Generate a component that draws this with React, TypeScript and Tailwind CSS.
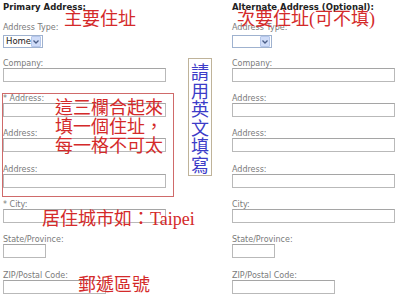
import type { ReactNode } from 'react';

const note = "font-['Liberation_Serif','Noto_Sans_CJK_TC',serif] text-[#d42a2a]";

function Label({ children, mt }: { children: ReactNode; mt: string }) {
  return <div className={`${mt} text-[8px] leading-[8px] text-[#7a7a7a] whitespace-nowrap`}>{children}</div>;
}

function Input({ w }: { w: string }) {
  return <div className={`${w} h-[14px] border border-[#b9b9b9] border-t-[#a5a5a5] bg-white`} />;
}

function Select({ value }: { value?: string }) {
  return (
    <div className="mt-[3px] flex h-[13px] w-[40px] items-center border border-[#9fb2cf] bg-white pl-[2px] pr-px">
      <span className="flex-1 text-[8.5px] leading-[11px] text-[#222]">{value}</span>
      <span className="flex h-[11px] w-[10px] items-center justify-center rounded-[1px] border border-[#b4c6ea] bg-[#cfdcf8]">
        <svg width="6" height="4" viewBox="0 0 6 4">
          <path d="M0.5 0.5 L3 3 L5.5 0.5" fill="none" stroke="#4a5d86" strokeWidth="1.3" />
        </svg>
      </span>
    </div>
  );
}

function Column({ title, type, boxed }: { title: string; type?: string; boxed?: boolean }) {
  return (
    <div className="flex flex-col">
      <div className="pt-[2px] text-[8.5px] font-bold leading-[10px] text-[#222] whitespace-nowrap">{title}</div>
      <Label mt="mt-[12px]">Address Type:</Label>
      <Select value={type} />
      <Label mt="mt-[12px]">Company:</Label>
      <Input w="w-[163px]" />
      <div
        className={`mt-[11px] -ml-px w-[172px] border pt-px pb-[8px] ${
          boxed ? 'border-[#cf6a6a]' : 'border-transparent'
        }`}
      >
        <Label mt="mt-0">{boxed ? '* Address:' : 'Address:'}</Label>
        <Input w="w-[163px]" />
        <Label mt="mt-[13px]">Address:</Label>
        <Input w="w-[163px]" />
        <Label mt="mt-[14px]">Address:</Label>
        <Input w="w-[163px]" />
      </div>
      <Label mt="mt-[4px]">{boxed ? '* City:' : 'City:'}</Label>
      <Input w="w-[163px]" />
      <Label mt="mt-[13px]">State/Province:</Label>
      <Input w="w-[43px]" />
      <Label mt="mt-[14px]">ZIP/Postal Code:</Label>
      <Input w="w-[103px]" />
    </div>
  );
}

export default function App() {
  return (
    <div className="relative h-[302px] w-[400px] overflow-hidden bg-white font-['DejaVu_Sans',sans-serif]">
      <div className="flex">
        <div className="w-[188px] shrink-0 pl-[3px]">
          <Column title="Primary Address:" type="Home" boxed />
        </div>
        <div className="w-[44px] shrink-0 pt-[58px]">
          <div className="flex h-[118px] w-[24px] justify-center border border-[#bfb39a] bg-white pt-[3px]">
            <div className="w-[18px] break-all font-['Noto_Sans_CJK_TC',serif] text-[18px] leading-[18.5px] text-[#3c3cc8]">
              請用英文填寫
            </div>
          </div>
        </div>
        <div className="shrink-0">
          <Column title="Alternate Address (Optional):" />
        </div>
      </div>

      {/* handwritten-style annotations laid over the form */}
      <div className={`absolute left-[64px] top-[10px] text-[18px] leading-[18px] ${note}`}>主要住址</div>
      <div className={`absolute left-[237px] top-[10px] text-[18px] leading-[18px] whitespace-nowrap ${note}`}>
        次要住址(可不填)
      </div>
      <div className={`absolute left-[55px] top-[99px] text-[18px] leading-[19px] whitespace-nowrap ${note}`}>
        這三欄合起來
        <br />
        填一個住址，
        <br />
        每一格不可太
      </div>
      <div className={`absolute left-[42px] top-[210px] text-[18px] leading-[18px] whitespace-nowrap ${note}`}>
        居住城市如：Taipei
      </div>
      <div className={`absolute left-[78px] top-[276px] text-[18px] leading-[18px] whitespace-nowrap ${note}`}>郵遞區號</div>
    </div>
  );
}
